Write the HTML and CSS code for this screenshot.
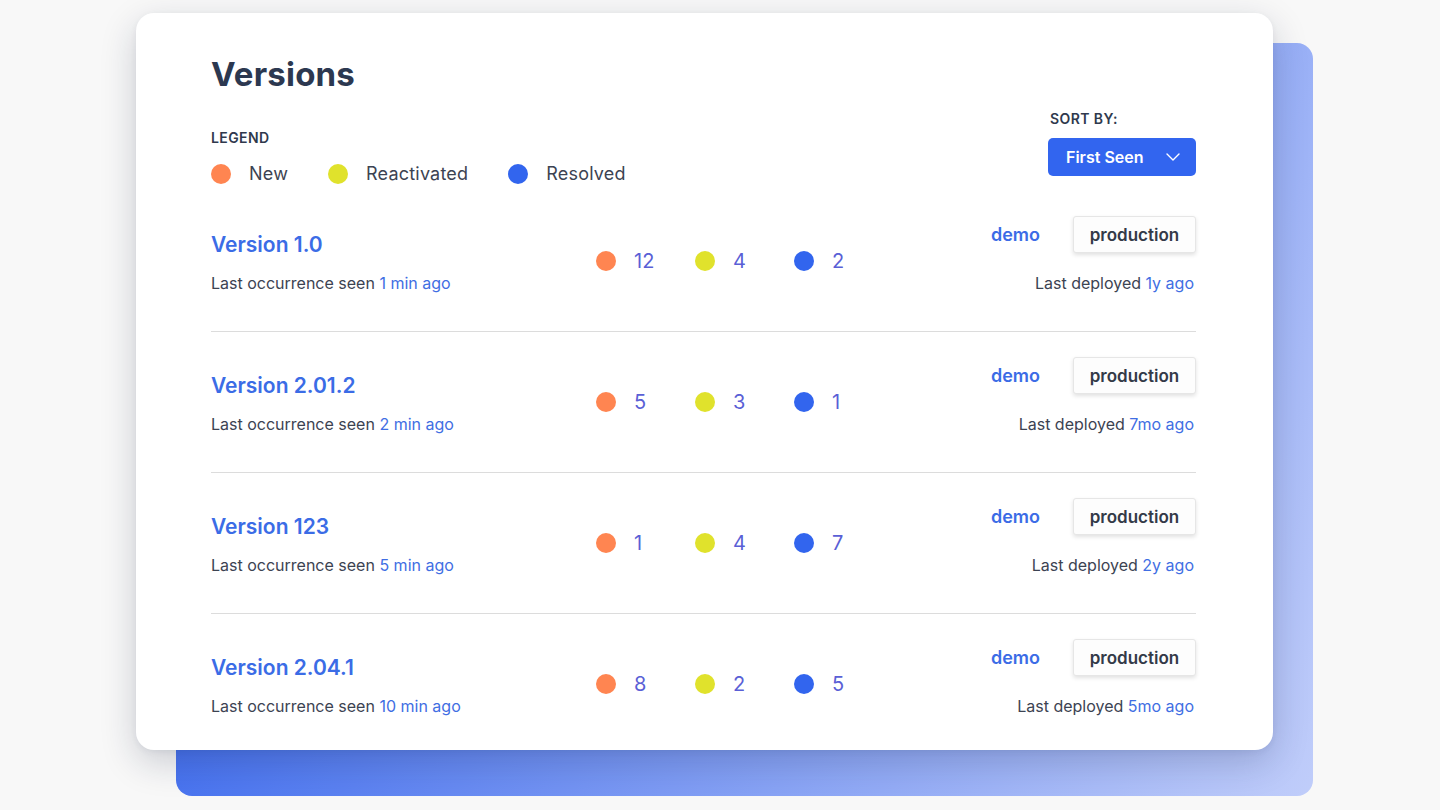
FILE: index.html
```html
<!DOCTYPE html>
<html lang="en">
<head>
<meta charset="utf-8">
<title>Versions</title>
<link rel="stylesheet" href="styles.css">
</head>
<body>
<div class="stage">
  <div class="backdrop"></div>
  <main class="card">
    <header class="head">
      <div class="head-left">
        <h1 class="title">Versions</h1>
        <div class="caps">LEGEND</div>
        <ul class="legend">
          <li class="legend-item"><span class="dot dot-new"></span>New</li>
          <li class="legend-item"><span class="dot dot-react"></span>Reactivated</li>
          <li class="legend-item"><span class="dot dot-res"></span>Resolved</li>
        </ul>
      </div>
      <div class="sort">
        <div class="caps">SORT BY:</div>
        <button class="sort-btn">First Seen
          <svg class="chev" width="14" height="8" viewBox="0 0 14 8"><polyline points="1,1 7,7 13,1" fill="none" stroke="#fff" stroke-width="1.4" stroke-linecap="round" stroke-linejoin="round"/></svg>
        </button>
      </div>
    </header>

    <section class="rows">
      <article class="row">
        <div class="info">
          <a class="ver">Version 1.0</a>
          <p class="meta">Last occurrence seen <span class="link">1 min ago</span></p>
        </div>
        <div class="counts">
          <span class="count"><span class="dot dot-new"></span>12</span>
          <span class="count"><span class="dot dot-react"></span>4</span>
          <span class="count"><span class="dot dot-res"></span>2</span>
        </div>
        <div class="deploy">
          <div class="env"><span class="env-name">demo</span><span class="tag">production</span></div>
          <p class="meta">Last deployed <span class="link">1y ago</span></p>
        </div>
      </article>

      <article class="row">
        <div class="info">
          <a class="ver">Version 2.01.2</a>
          <p class="meta">Last occurrence seen <span class="link">2 min ago</span></p>
        </div>
        <div class="counts">
          <span class="count"><span class="dot dot-new"></span>5</span>
          <span class="count"><span class="dot dot-react"></span>3</span>
          <span class="count"><span class="dot dot-res"></span>1</span>
        </div>
        <div class="deploy">
          <div class="env"><span class="env-name">demo</span><span class="tag">production</span></div>
          <p class="meta">Last deployed <span class="link">7mo ago</span></p>
        </div>
      </article>

      <article class="row">
        <div class="info">
          <a class="ver">Version 123</a>
          <p class="meta">Last occurrence seen <span class="link">5 min ago</span></p>
        </div>
        <div class="counts">
          <span class="count"><span class="dot dot-new"></span>1</span>
          <span class="count"><span class="dot dot-react"></span>4</span>
          <span class="count"><span class="dot dot-res"></span>7</span>
        </div>
        <div class="deploy">
          <div class="env"><span class="env-name">demo</span><span class="tag">production</span></div>
          <p class="meta">Last deployed <span class="link">2y ago</span></p>
        </div>
      </article>

      <article class="row">
        <div class="info">
          <a class="ver">Version 2.04.1</a>
          <p class="meta">Last occurrence seen <span class="link">10 min ago</span></p>
        </div>
        <div class="counts">
          <span class="count"><span class="dot dot-new"></span>8</span>
          <span class="count"><span class="dot dot-react"></span>2</span>
          <span class="count"><span class="dot dot-res"></span>5</span>
        </div>
        <div class="deploy">
          <div class="env"><span class="env-name">demo</span><span class="tag">production</span></div>
          <p class="meta">Last deployed <span class="link">5mo ago</span></p>
        </div>
      </article>
    </section>
  </main>
</div>
</body>
</html>
```

FILE: styles.css
```css
* { box-sizing: border-box; }

html, body {
  margin: 0;
  padding: 0;
  background: #f8f8f8;
  font-family: Inter, "Noto Sans", "Liberation Sans", sans-serif;
  color: #3c4352;
}

body {
  width: 1440px;
  height: 810px;
  overflow: hidden;
}

.stage {
  position: relative;
  width: 1137px;
  margin: 13px 0 0 136px;
}

.backdrop {
  position: absolute;
  left: 40px;
  top: 30px;
  width: 1137px;
  height: 753px;
  border-radius: 16px;
  background: linear-gradient(116deg, rgb(36, 88, 236) 0%, rgb(192, 205, 250) 100%);
}

.card {
  position: relative;
  height: 737px;
  overflow: hidden;
  background: #fff;
  border-radius: 18px;
  padding: 41px 77px 0 75px;
  box-shadow: 0 12px 36px rgba(20, 30, 60, 0.2), 0 2px 6px rgba(20, 30, 60, 0.06);
}

.head {
  display: flex;
  justify-content: space-between;
  align-items: flex-start;
}

.title {
  margin: 0;
  font-size: 33px;
  line-height: 40px;
  font-weight: 700;
  color: #2c3850;
  letter-spacing: 0.2px;
}

.caps {
  font-size: 14px;
  line-height: 20px;
  font-weight: 600;
  color: #2f394d;
  letter-spacing: 0.4px;
}

.head-left .caps { margin-top: 34px; }

.legend {
  list-style: none;
  margin: 14px 0 0;
  padding: 0;
  display: flex;
  gap: 40px;
}

.legend-item {
  display: flex;
  align-items: center;
  gap: 18px;
  font-size: 18px;
  line-height: 24px;
  letter-spacing: 0.2px;
  color: #3c4352;
}

.dot {
  width: 20px;
  height: 20px;
  border-radius: 50%;
  flex: none;
}
.dot-new { background: #ff8551; }
.dot-react { background: #e0e22c; }
.dot-res { background: #3265ee; }

.sort {
  padding-top: 55px;
  display: flex;
  flex-direction: column;
  align-items: flex-start;
}

.sort .caps { padding-left: 2px; }

.sort-btn {
  margin-top: 9px;
  width: 148px;
  height: 38px;
  border: 0;
  border-radius: 5px;
  background: #3265ef;
  color: #fff;
  font-family: inherit;
  font-size: 16px;
  font-weight: 600;
  display: flex;
  align-items: center;
  justify-content: space-between;
  padding: 0 16px 0 18px;
}

.chev { display: block; }

.rows { margin-top: 5px; }

.row {
  display: grid;
  grid-template-columns: 385px 1fr auto;
  align-items: end;
  padding: 25px 0 38px;
  border-bottom: 1px solid #dcdcdc;
}

.row:last-child { border-bottom: 0; }

.info { display: flex; flex-direction: column; }

.ver {
  font-size: 21px;
  line-height: 24px;
  font-weight: 600;
  color: #3b6ce6;
}

.meta {
  margin: 16px 0 0;
  font-size: 16px;
  line-height: 20px;
  color: #3c4352;
}

.link { color: #3f6ee3; }

.counts {
  display: flex;
  margin-bottom: 20px;
}

.count {
  width: 99px;
  display: flex;
  align-items: center;
  gap: 18px;
  font-size: 20px;
  line-height: 24px;
  color: #5a5fd6;
}

.deploy {
  display: flex;
  flex-direction: column;
  align-items: flex-end;
}

.deploy .meta { margin-top: 20px; margin-right: 2px; }

.env {
  display: flex;
  align-items: center;
  gap: 33px;
}

.env-name {
  font-size: 18px;
  font-weight: 600;
  color: #3b6ce6;
}

.tag {
  width: 123px;
  height: 37px;
  display: flex;
  align-items: center;
  justify-content: center;
  border: 1px solid #e6e6e6;
  border-radius: 3px;
  background: #fdfdfd;
  box-shadow: 0 2px 4px rgba(0, 0, 0, 0.12);
  font-size: 17px;
  font-weight: 600;
  color: #333a48;
}
```
